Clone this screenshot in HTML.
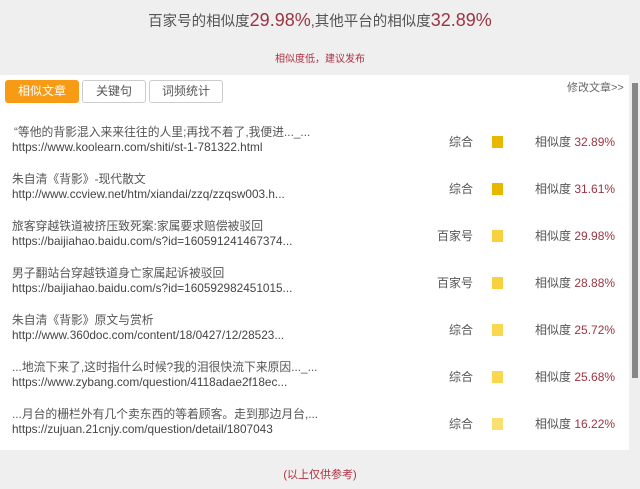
<!DOCTYPE html>
<html><head><meta charset="utf-8"><style>
body{margin:0;width:640px;height:489px;background:#efefef;font-family:"Liberation Sans","Noto Sans CJK SC",sans-serif;position:relative;overflow:hidden;color:#555}
.t{position:absolute;white-space:nowrap}
.panel{position:absolute;left:0;top:75px;width:629px;height:375px;background:#fff}
.sb{position:absolute;left:632px;top:83px;width:6px;height:295px;background:#888}
.btn{position:absolute;top:80px;height:21px;border:1px solid #ccc;border-radius:3px;font-size:12px;line-height:21px;text-align:center;color:#555;background:#fff}
.row1{font-size:11.8px;color:#555}
.row2{font-size:11.8px;color:#444}
.sq{position:absolute;left:492px;width:11px;height:12px}
.r{color:#9b3442}
</style></head><body>
<div class="t" style="left:0;width:640px;text-align:center;top:10px;font-size:14.5px;color:#555">百家号的相似度<span class="r" style="font-size:18px">29.98%</span>,其他平台的相似度<span class="r" style="font-size:18px">32.89%</span></div>
<div class="t" style="left:0;width:640px;text-align:center;top:50px;font-size:10px;color:#b03040">相似度低，建议发布</div>
<div class="panel"></div>
<div class="sb"></div>
<div class="btn" style="left:5px;width:72px;background:#f79a14;border-color:#f79a14;color:#fff">相似文章</div>
<div class="btn" style="left:82px;width:62px">关键句</div>
<div class="btn" style="left:149px;width:72px">词频统计</div>
<div class="t" style="left:567px;top:79px;font-size:11px;color:#666">修改文章&gt;&gt;</div>

<div class="t row1" style="left:14px;top:123px">“等他的背影混入来来往往的人里;再找不着了,我便进..._...</div>
<div class="t row2" style="left:12px;top:140px">https://www.koolearn.com/shiti/st-1-781322.html</div>
<div class="t" style="left:449px;top:133px;font-size:12px">综合</div><div class="sq" style="top:136px;background:#e8b800"></div>
<div class="t" style="left:535px;top:133px;font-size:12px">相似度 <span class="r">32.89%</span></div>

<div class="t row1" style="left:12px;top:170px">朱自清《背影》-现代散文</div>
<div class="t row2" style="left:12px;top:187px">http://www.ccview.net/htm/xiandai/zzq/zzqsw003.h...</div>
<div class="t" style="left:449px;top:180px;font-size:12px">综合</div><div class="sq" style="top:183px;background:#e8b800"></div>
<div class="t" style="left:535px;top:180px;font-size:12px">相似度 <span class="r">31.61%</span></div>

<div class="t row1" style="left:12px;top:217px">旅客穿越铁道被挤压致死案:家属要求赔偿被驳回</div>
<div class="t row2" style="left:12px;top:234px">https://baijiahao.baidu.com/s?id=160591241467374...</div>
<div class="t" style="left:437px;top:227px;font-size:12px">百家号</div><div class="sq" style="top:230px;background:#f9d040"></div>
<div class="t" style="left:535px;top:227px;font-size:12px">相似度 <span class="r">29.98%</span></div>

<div class="t row1" style="left:12px;top:264px">男子翻站台穿越铁道身亡家属起诉被驳回</div>
<div class="t row2" style="left:12px;top:281px">https://baijiahao.baidu.com/s?id=160592982451015...</div>
<div class="t" style="left:437px;top:274px;font-size:12px">百家号</div><div class="sq" style="top:277px;background:#f9d040"></div>
<div class="t" style="left:535px;top:274px;font-size:12px">相似度 <span class="r">28.88%</span></div>

<div class="t row1" style="left:12px;top:311px">朱自清《背影》原文与赏析</div>
<div class="t row2" style="left:12px;top:328px">http://www.360doc.com/content/18/0427/12/28523...</div>
<div class="t" style="left:449px;top:321px;font-size:12px">综合</div><div class="sq" style="top:324px;background:#f9d850"></div>
<div class="t" style="left:535px;top:321px;font-size:12px">相似度 <span class="r">25.72%</span></div>

<div class="t row1" style="left:12px;top:358px">...地流下来了,这时指什么时候?我的泪很快流下来原因..._...</div>
<div class="t row2" style="left:12px;top:375px">https://www.zybang.com/question/4118adae2f18ec...</div>
<div class="t" style="left:449px;top:368px;font-size:12px">综合</div><div class="sq" style="top:371px;background:#f9d850"></div>
<div class="t" style="left:535px;top:368px;font-size:12px">相似度 <span class="r">25.68%</span></div>

<div class="t row1" style="left:12px;top:405px">...月台的栅栏外有几个卖东西的等着顾客。走到那边月台,...</div>
<div class="t row2" style="left:12px;top:422px">https://zujuan.21cnjy.com/question/detail/1807043</div>
<div class="t" style="left:449px;top:415px;font-size:12px">综合</div><div class="sq" style="top:418px;background:#fae070"></div>
<div class="t" style="left:535px;top:415px;font-size:12px">相似度 <span class="r">16.22%</span></div>

<div class="t" style="left:0;width:640px;text-align:center;top:466px;font-size:11px;color:#b03040">(以上仅供参考)</div>
</body></html>
